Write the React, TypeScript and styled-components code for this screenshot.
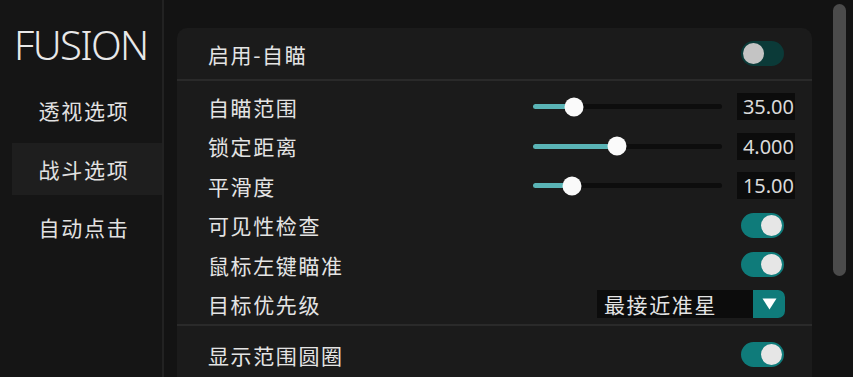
import styled, { createGlobalStyle } from 'styled-components';

const GlobalStyle = createGlobalStyle`
  html, body {
    margin: 0;
    height: 100%;
    overflow: hidden;
    background: #131313;
  }
  * {
    box-sizing: border-box;
  }
`;

const Page = styled.div`
  display: flex;
  width: 853px;
  height: 377px;
  background: #131313;
  font-family: 'Noto Sans', 'Noto Sans CJK SC', sans-serif;
  color: #e4e4e4;
  overflow: hidden;
`;

const Sidebar = styled.div`
  width: 164px;
  flex-shrink: 0;
  background: #151515;
  border-right: 2px solid #222;
  padding-left: 12px;
`;

const Logo = styled.div`
  height: 84px;
  padding-top: 21px;
  padding-left: 2px;
  font-family: 'Noto Sans', sans-serif;
  font-weight: 300;
  font-size: 40px;
  letter-spacing: -1.6px;
  line-height: 48px;
  color: #e8e8e8;
`;

const NavList = styled.div`
  display: flex;
  flex-direction: column;
  gap: 6.5px;
`;

const NavItem = styled.div<{ active?: boolean }>`
  height: 52px;
  display: flex;
  align-items: center;
  justify-content: center;
  padding-right: 6px;
  font-family: 'Noto Sans CJK SC', sans-serif;
  font-size: 21px;
  letter-spacing: 1.8px;
  color: #e2e2e2;
  background: ${(p) => (p.active ? '#1e1e1e' : 'transparent')};
`;

const Main = styled.div`
  flex: 1;
  display: flex;
  align-items: flex-start;
`;

const Card = styled.div`
  width: 635px;
  margin-left: 13px;
  margin-top: 28px;
  background: #1b1b1b;
  border-radius: 10px;
  padding-bottom: 20px;
`;

const HeaderRow = styled.div`
  height: 51px;
  display: flex;
  align-items: center;
  padding: 0 17px 0 31px;
`;

const Divider = styled.div`
  height: 2px;
  background: #2a2a2a;
`;

const Section = styled.div<{ top: number }>`
  padding-top: ${(p) => p.top}px;
`;

const Row = styled.div`
  height: 39.5px;
  display: flex;
  align-items: center;
  padding: 0 17px 0 31px;
`;

const Label = styled.div`
  flex: 1;
  font-family: 'Noto Sans CJK SC', sans-serif;
  font-size: 21px;
  letter-spacing: 1.6px;
  color: #e4e4e4;
`;

const SliderTrack = styled.div`
  position: relative;
  width: 189px;
  height: 5px;
  border-radius: 3px;
  background: #0d0d0d;
  margin-right: 15px;
`;

const SliderFill = styled.div`
  height: 100%;
  border-radius: 3px;
  background: #5ab4b6;
`;

const SliderKnob = styled.div`
  position: absolute;
  top: 50%;
  width: 19px;
  height: 19px;
  border-radius: 50%;
  background: #fafafa;
  transform: translate(-50%, -50%);
`;

const ValueBox = styled.div`
  width: 58px;
  height: 27px;
  background: #0c0c0c;
  display: flex;
  align-items: center;
  justify-content: flex-end;
  padding-right: 1px;
  font-family: 'Noto Sans', sans-serif;
  font-size: 20px;
  color: #dadada;
`;

const Toggle = styled.div<{ on?: boolean }>`
  width: 43px;
  height: 25px;
  border-radius: 13px;
  margin-right: 11px;
  background: ${(p) => (p.on ? '#0f7b7a' : '#0b3a38')};
  display: flex;
  align-items: center;
  justify-content: ${(p) => (p.on ? 'flex-end' : 'flex-start')};
  padding: 0 2px;
`;

const ToggleKnob = styled.div<{ on?: boolean }>`
  width: 21px;
  height: 21px;
  border-radius: 50%;
  background: ${(p) => (p.on ? '#e6e6e6' : '#c4c4c4')};
`;

const Select = styled.div`
  width: 188px;
  height: 28px;
  margin-right: 10px;
  display: flex;
  background: #0c0c0c;
  border-radius: 0 7px 7px 0;
  overflow: hidden;
`;

const SelectText = styled.div`
  flex: 1;
  display: flex;
  align-items: center;
  padding-left: 7px;
  font-family: 'Noto Sans CJK SC', sans-serif;
  font-size: 21px;
  letter-spacing: 1.6px;
  color: #e4e4e4;
`;

const SelectArrow = styled.div`
  width: 32px;
  background: #0f7b7a;
  display: flex;
  align-items: center;
  justify-content: center;
`;

const ScrollThumb = styled.div`
  width: 13px;
  height: 272px;
  margin-left: 21px;
  margin-top: 4px;
  border-radius: 7px;
  background: #4b4b4b;
`;

const Slider = ({ pct, value }: { pct: number; value: string }) => (
  <>
    <SliderTrack>
      <SliderFill style={{ width: `${pct}%` }} />
      <SliderKnob style={{ left: `${pct}%` }} />
    </SliderTrack>
    <ValueBox>{value}</ValueBox>
  </>
);

const Switch = ({ on }: { on?: boolean }) => (
  <Toggle on={on}>
    <ToggleKnob on={on} />
  </Toggle>
);

export default function App() {
  return (
    <Page>
      <GlobalStyle />
      <Sidebar>
        <Logo>FUSION</Logo>
        <NavList>
          <NavItem>透视选项</NavItem>
          <NavItem active>战斗选项</NavItem>
          <NavItem>自动点击</NavItem>
        </NavList>
      </Sidebar>
      <Main>
        <Card>
          <HeaderRow>
            <Label>启用-自瞄</Label>
            <Switch />
          </HeaderRow>
          <Divider />
          <Section top={6}>
            <Row>
              <Label>自瞄范围</Label>
              <Slider pct={21.5} value="35.00" />
            </Row>
            <Row>
              <Label>锁定距离</Label>
              <Slider pct={44.5} value="4.000" />
            </Row>
            <Row>
              <Label>平滑度</Label>
              <Slider pct={20.5} value="15.00" />
            </Row>
            <Row>
              <Label>可见性检查</Label>
              <Switch on />
            </Row>
            <Row>
              <Label>鼠标左键瞄准</Label>
              <Switch on />
            </Row>
            <Row>
              <Label>目标优先级</Label>
              <Select>
                <SelectText>最接近准星</SelectText>
                <SelectArrow>
                  <svg width="15" height="12" viewBox="0 0 15 12">
                    <path d="M0.5 0.5 L14.5 0.5 L7.5 11.5 Z" fill="#fff" />
                  </svg>
                </SelectArrow>
              </Select>
            </Row>
          </Section>
          <Divider />
          <Section top={9}>
            <Row>
              <Label>显示范围圆圈</Label>
              <Switch on />
            </Row>
          </Section>
        </Card>
        <ScrollThumb />
      </Main>
    </Page>
  );
}
